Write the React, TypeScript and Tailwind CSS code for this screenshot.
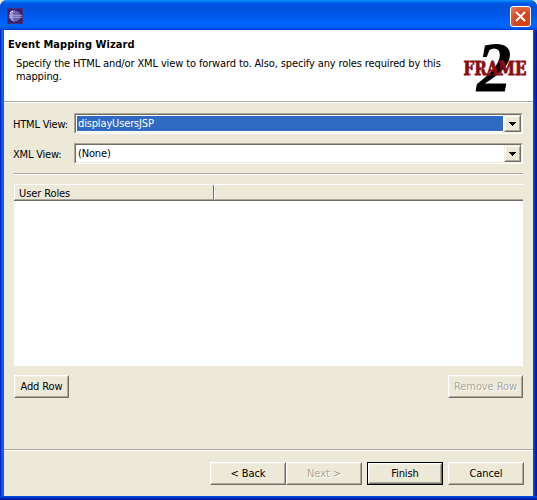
import React from 'react';

const edge = 'border border-t-white border-l-white border-r-[#716f64] border-b-[#716f64]';
const inner = 'border border-t-[#f1efe2] border-l-[#f1efe2] border-r-[#aca899] border-b-[#aca899]';

function Button({ label, width, disabled, primary }: { label: string; width: string; disabled?: boolean; primary?: boolean }) {
  return (
    <button className={`${width} h-[23px] shrink-0 ${primary ? 'border border-black' : ''}`}>
      <span className={`block h-full ${edge}`}>
        <span
          className={`flex h-full items-center justify-center whitespace-nowrap tracking-[-0.1px] ${inner} ${
            disabled ? 'text-[#aca899] [text-shadow:1px_1px_0_#fff]' : ''
          }`}
        >
          {label}
        </span>
      </span>
    </button>
  );
}

function Combo({ label, value, selected }: { label: string; value: string; selected?: boolean }) {
  return (
    <div className="flex h-[21px] items-center">
      <span className="-ml-px w-[61px] shrink-0 whitespace-nowrap pt-px tracking-[-0.2px]">{label}</span>
      <div className="h-[21px] w-[449px] border border-t-[#aca899] border-l-[#aca899] border-r-white border-b-white">
        <div className="flex h-full border border-t-[#716f64] border-l-[#716f64] border-r-[#f1efe2] border-b-[#f1efe2] bg-white">
          <div className="flex min-w-0 flex-1 p-px">
            <div className={`flex flex-1 items-center pl-px tracking-[-0.15px] ${selected ? 'bg-[#316ac5] text-white' : ''}`}>{value}</div>
          </div>
          <div className="h-[17px] w-[17px] border border-t-[#f1efe2] border-l-[#f1efe2] border-r-[#716f64] border-b-[#716f64] bg-[#ece9d8]">
            <div className="flex h-full items-center justify-center border border-t-white border-l-white border-r-[#aca899] border-b-[#aca899]">
              <svg width="7" height="4" shapeRendering="crispEdges">
                <path d="M0 0h7v1H6v1H5v1H4v1H3V3H2V2H1V1H0z" />
              </svg>
            </div>
          </div>
        </div>
      </div>
    </div>
  );
}

function EclipseIcon() {
  return (
    <svg width="16" height="16" viewBox="0 0 16 16">
      <rect width="16" height="16" fill="#34206f" />
      <path d="M0 0h16v16H0z" fill="none" stroke="#5a3b91" />
      <circle cx="8" cy="8" r="5.5" fill="#6a60a8" />
      <path d="M8 2.3a5.7 5.7 0 1 0 0 11.4A6 6 0 0 1 6 8a6 6 0 0 1 2-5.7" fill="#9a95cd" />
      <path d="M3 5q1-2 3-2" stroke="#f2edff" fill="none" />
      <path d="M2 7.3h13M2 9.3h13" stroke="#b3a9e5" strokeWidth=".9" />
    </svg>
  );
}

function Logo() {
  return (
    <svg width="70" height="63" viewBox="0 0 70 63" className="overflow-visible">
      <text x="18" y="52.5" fontFamily="Liberation Serif, serif" fontWeight="700" fontStyle="italic" fontSize="70" textLength="34" lengthAdjust="spacingAndGlyphs" stroke="#000" strokeWidth="1">2</text>
      <text x="4.5" y="37" fontFamily="DejaVu Serif, serif" fontWeight="700" fontSize="19" textLength="63" lengthAdjust="spacingAndGlyphs" fill="#8e0a10" stroke="#8e0a10" strokeWidth=".9">FRAME</text>
      <path d="M10.7 22v16M22.5 22v16M62 22v16" stroke="#fff" strokeWidth=".6" opacity=".6" />
    </svg>
  );
}

export default function App() {
  return (
    <div className="flex h-[500px] w-[537px] flex-col overflow-hidden bg-[#ece9d8] text-[11px] leading-[13px] text-black [font-family:'DejaVu_Sans_Condensed','DejaVu_Sans',sans-serif]">
      <div className="flex h-full flex-col rounded-t-[7px] bg-[linear-gradient(90deg,#0019cf_0,#0831d9_1px,#166aee_2px,#0855dd_4px,#0855dd_533px,#0441d8_534px,#001ea0_536px,#00138c_537px)]">
        <header className="flex h-[30px] shrink-0 items-center justify-between rounded-t-[7px] bg-[linear-gradient(180deg,#0997ff_0,#0058e6_3px,#0053dd_8px,#0058e8_15px,#0066ff_24px,#0062f8_27px,#003dd7_30px)] pl-[7px] pr-[6px] pt-[2px]">
          <EclipseIcon />
          <button className="flex h-[21px] w-[21px] items-center justify-center rounded-[3px] border border-white bg-[radial-gradient(circle_at_70%_80%,#d94413,#d5451f_45%,#e9805f)]">
            <svg width="13" height="13" viewBox="0 0 13 13">
              <path d="M2 2l9 9M11 2l-9 9" stroke="#fff" strokeWidth="2" />
            </svg>
          </button>
        </header>
        <main className="mx-[4px] flex h-[466px] flex-col bg-[#ece9d8]">
          <section className="flex h-[71px] shrink-0 bg-white pl-[4px]">
            <div className="w-[451px] shrink-0 pt-[8px]">
              <h1 className="font-bold tracking-[0.05px]">Event Mapping Wizard</h1>
              <p className="mt-[6px] whitespace-nowrap pl-[8px] tracking-[-0.125px]">
                Specify the HTML and/or XML view to forward to. Also, specify any roles required by this
                <br />
                mapping.
              </p>
            </div>
            <div className="pt-[8px]">
              <Logo />
            </div>
          </section>
          <div className="h-[2px] shrink-0 border-t border-t-[#aca899] bg-white" />
          <section className="flex h-[346px] shrink-0 flex-col px-[10px] pt-[10px]">
            <Combo label="HTML View:" value="displayUsersJSP" selected />
            <div className="h-[9px] shrink-0" />
            <Combo label="XML View:" value="(None)" />
            <div className="mt-[9px] h-[2px] w-[509px] shrink-0 border-t border-t-[#aca899] bg-white" />
            <div className="mt-[9px] h-[182px] w-[509px] shrink-0 bg-white">
              <div className="flex h-[17px] border-t border-b border-t-white border-b-[#716f64] bg-[#ece9d8]">
                <div className="flex w-[200px] items-center border-l border-r border-b border-l-white border-r-[#716f64] border-b-[#aca899] pl-[4px] pt-[2px] tracking-[-0.1px]">User Roles</div>
                <div className="flex-1 border-b border-l border-l-white border-b-[#aca899]" />
              </div>
            </div>
            <div className="mt-[9px] flex w-[509px] justify-between">
              <Button label="Add Row" width="w-[55px]" />
              <Button label="Remove Row" width="w-[75px]" disabled />
            </div>
          </section>
          <div className="h-[2px] shrink-0 border-t border-t-[#aca899] bg-white" />
          <footer className="flex pt-[11px] pl-[206px]">
            <Button label="< Back" width="w-[76px]" />
            <Button label="Next >" width="w-[76px]" disabled />
            <div className="w-[5px]" />
            <Button label="Finish" width="w-[76px]" primary />
            <div className="w-[5px]" />
            <Button label="Cancel" width="w-[76px]" />
          </footer>
        </main>
        <div className="h-[4px] shrink-0 bg-[linear-gradient(180deg,#0855dd,#0441d8_25%,#001ea0_75%,#00138c)]" />
      </div>
    </div>
  );
}
